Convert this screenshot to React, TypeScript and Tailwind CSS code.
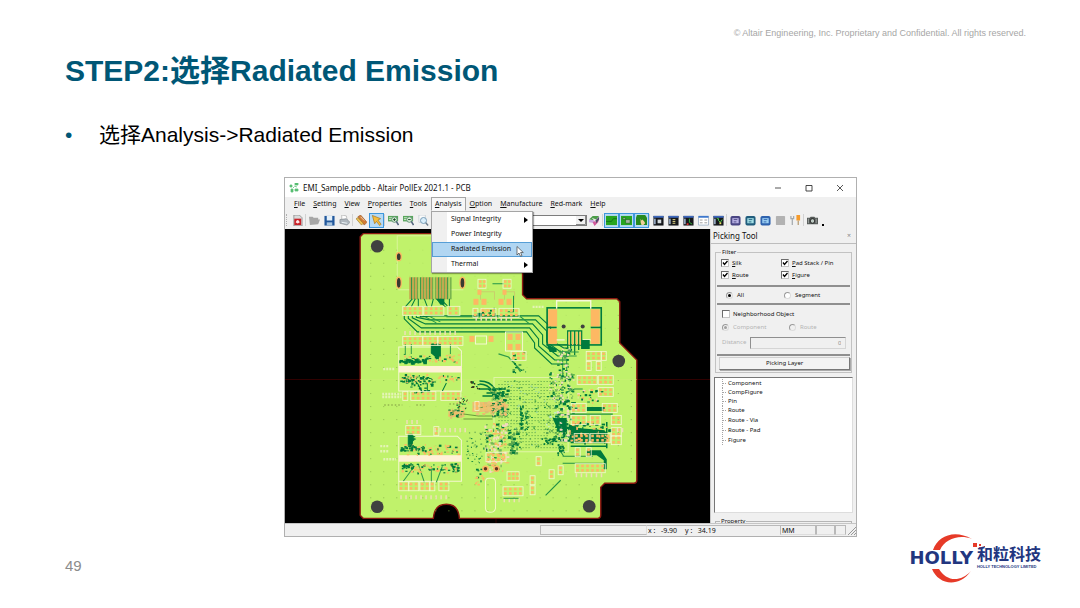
import type { ReactNode } from "react";
import { clsx } from "clsx";

type Rect = { x: number; y: number; w: number; h: number; fill: string };

const ORANGE = "#fdb863";
const GREEN = "#007a3d";
const SILK = "#f4f7cf";
const PINK = "#f3d9c0";

// Small deterministic generator so the board looks the same on every render
function makeRandom(seed: number) {
  let state = seed;
  return () => {
    state = (state * 1664525 + 1013904223) % 4294967296;
    return state / 4294967296;
  };
}

function scatter(
  seed: number, count: number,
  x: number, y: number, w: number, h: number,
  fills: string[], size = 3
): Rect[] {
  const rnd = makeRandom(seed);
  return Array.from({ length: count }, () => ({
    x: Math.round((x + rnd() * w) * 2) / 2,
    y: Math.round((y + rnd() * h) * 2) / 2,
    w: 0.8 + rnd() * size,
    h: 0.8 + rnd() * size * 0.7,
    fill: fills[Math.floor(rnd() * fills.length)],
  }));
}

const scatters: Rect[] = [
  // upper module
  ...scatter(3, 60, 400, 354, 58, 8, [ORANGE, GREEN, ORANGE], 2),
  ...scatter(4, 40, 399, 359, 26, 3, [GREEN], 3),
  ...scatter(5, 70, 400, 374, 58, 8, [ORANGE, GREEN, ORANGE], 2),
  ...scatter(6, 30, 400, 376, 34, 5, [GREEN], 2),
  ...scatter(8, 22, 410, 382, 22, 10, [GREEN], 2),
  // lower module
  ...scatter(11, 70, 401, 444, 56, 10, [ORANGE, ORANGE, GREEN], 2),
  ...scatter(12, 36, 400, 446, 25, 4, [GREEN], 2),
  ...scatter(13, 70, 401, 463, 56, 9, [ORANGE, ORANGE, GREEN], 2),
  ...scatter(14, 24, 401, 463, 12, 5, [GREEN], 2),
  ...scatter(15, 20, 450, 463, 8, 7, [GREEN], 2),
  ...scatter(16, 22, 408, 434, 5, 12, [GREEN], 2),
  // analog area left of the main chip
  ...scatter(20, 80, 490, 386, 16, 30, [GREEN, GREEN, "#8fc25a"], 3),
  ...scatter(27, 14, 470, 380, 10, 8, ["#3d3a20", GREEN], 2),
  ...scatter(21, 80, 472, 401, 33, 13, ["#efc170", "#dcbf74", "#e6c678", ORANGE], 3),
  ...scatter(26, 40, 448, 408, 15, 9, ["#dcbf74", "#75a045", GREEN, ORANGE], 2),
  ...scatter(28, 30, 455, 396, 13, 12, ["#3d3a20", "#e6c678", GREEN], 1),
  ...scatter(22, 90, 484, 422, 22, 46, [GREEN, PINK, "#75b55a", ORANGE], 3),
  ...scatter(23, 60, 465, 430, 24, 34, [GREEN, "#75b55a"], 1),
  ...scatter(24, 70, 488, 428, 16, 44, [PINK, PINK, ORANGE], 2),
  ...scatter(29, 36, 507, 426, 9, 28, [GREEN, "#58a54f"], 3),
  ...scatter(25, 16, 474, 468, 9, 16, [GREEN, ORANGE], 2),
  // inside the main chip
  ...scatter(30, 120, 506, 380, 56, 68, [GREEN, "#58a54f", "#9dd9a0"], 1),
  ...scatter(31, 30, 519, 404, 2, 24, [GREEN], 2),
  ...scatter(33, 24, 524, 410, 3, 22, [GREEN], 1),
  ...scatter(34, 20, 545, 406, 14, 26, ["#c3ead0", "#58a54f"], 2),
  ...scatter(35, 20, 541, 437, 14, 6, [GREEN], 2),
  ...scatter(32, 16, 556, 444, 8, 10, [GREEN], 2),
  // memory and power area on the right
  ...scatter(40, 80, 548, 372, 24, 26, [GREEN, GREEN, PINK, "#75b55a"], 2),
  ...scatter(41, 110, 554, 398, 20, 42, [GREEN, GREEN, PINK], 3),
  ...scatter(42, 90, 568, 420, 40, 22, [GREEN, GREEN, ORANGE], 3),
  ...scatter(43, 50, 556, 348, 14, 32, [GREEN, "#58a54f", PINK], 2),
  ...scatter(44, 30, 576, 386, 26, 16, [GREEN, PINK, ORANGE], 2),
  ...scatter(45, 14, 510, 352, 16, 20, [GREEN, "#58a54f"], 2),
  ...scatter(46, 14, 480, 308, 14, 8, [ORANGE, GREEN], 2),
];

// [x, y, columns, step] rows of two-pad parts
const partRows: [number, number, number, number][] = [
  [403, 307, 4, 5], [424, 307, 4, 5], [448, 307, 2, 6],
  [403, 337, 4, 5], [423, 337, 3, 5], [438, 337, 5, 5],
  [403, 392, 1, 5], [411, 392, 5, 5], [441, 392, 4, 5],
  [406, 426, 3, 5], [434, 427, 1, 5],
  [399, 482, 2, 5], [409, 482, 2, 5], [420, 482, 2, 5], [430, 482, 1, 5], [439, 482, 2, 5],
  [473, 309, 1, 5], [481, 309, 3, 5], [499, 309, 4, 5],
  [478, 280, 2, 4], [503, 280, 2, 4],
  [586, 352, 3, 5], [601, 352, 1, 5], [586, 362, 1, 5], [596, 362, 1, 5],
  [577, 376, 4, 5], [598, 376, 3, 5], [571, 404, 3, 5], [602, 404, 3, 5],
  [571, 416, 3, 5], [590, 416, 2, 5], [611, 416, 2, 5], [611, 428, 2, 5], [611, 436, 2, 5],
  [574, 434, 3, 5], [590, 434, 4, 5], [575, 464, 6, 5],
  [598, 388, 3, 5], [575, 448, 1, 5], [586, 448, 1, 5],
  [507, 472, 3, 4], [503, 487, 4, 5], [530, 476, 1, 5], [530, 486, 1, 5],
  [536, 457, 1, 5], [549, 470, 1, 5], [558, 466, 1, 5], [486, 453, 4, 5],
  [511, 352, 3, 5], [475, 402, 1, 4],
];

function offBoard(x: number, y: number) {
  return (x > 520 && y < 300) || (x > 598 && y > 482) || (x > 617 && y < 362);
}

const gridDots: [number, number][] = [];
for (let x = 370; x < 632; x += 13) {
  for (let y = 250; y < 516; y += 13) {
    if (!offBoard(x, y)) gridDots.push([x, y]);
  }
}

const bgaDots: [number, number][] = [];
for (let x = 498; x < 564; x += 3) {
  for (let y = 381; y < 450; y += 3) {
    if ((x * 7 + y * 5) % 11 > 1) bgaDots.push([x, y]);
  }
}

const busTraces = [0, 1, 2, 3, 4].map((i) => {
  const y = 332 - i * 4;
  return `M${404 + i * 4} 316V${319 - i / 2}L${417 + i * 4} ${y}H${526 + i * 3}L${534 + i * 4} ${y + 11}V${348 - i * 2}L${551 + i * 3} ${364 - i * 4}H568`;
});

const OUTLINE =
  "M363 234H519Q522 234 522 237V295L526 299H616L619 302V343L636 360V480Q636 483 633 483H604L600 487V515Q600 518 597 518H459Q458 504 446 504Q434 504 433 518H363L360 515V237Z";

function PcbView() {
  return (
    <svg viewBox="285 229 424 294" preserveAspectRatio="xMidYMid slice" className="h-full w-full bg-black" role="img" aria-label="PCB">
      <path d="M285 379.5H709M495.5 229V523" stroke="#300000" />
      <path d={OUTLINE} fill="#c0f26b" stroke="#8c1a12" strokeWidth="1.4" />
      <path d="M360 379.5H636" stroke="#cdee78" strokeWidth=".5" />
      {gridDots.map(([x, y]) => (
        <rect key={`${x}-${y}`} x={x} y={y} width="1" height="1" fill="#86b347" opacity={y < 480 && x > 400 && x < 615 ? 0.2 : 0.8} />
      ))}

      {/* mounting holes */}
      {[[377, 246.5], [377, 506.5], [588.5, 506], [618, 361]].map(([x, y]) => (
        <circle key={`${x}-${y}`} cx={x} cy={y} r="6.3" fill="#404140" />
      ))}

      {/* edge connector */}
      <path d="M397 289V236H462M398 290H463" fill="none" stroke="#d9f59a" />
      {[[398.5, 257, 4], [398.5, 283, 5.5], [462, 283, 5.5]].map(([x, y, r]) => (
        <ellipse key={`${x}-${y}`} cx={x} cy={y} rx="2.5" ry={r} fill="#383a30" stroke={ORANGE} strokeWidth="1.3" />
      ))}
      {Array.from({ length: 14 }, (_, i) => (
        <g key={i}>
          <rect x={409 + i * 3} y="277.5" width="2" height="22" fill={i % 5 === 3 ? "#b5d460" : "#c9a24e"} />
          <rect x={411 + i * 3} y="277.5" width="1" height="22" fill={i % 3 ? "#4f9440" : GREEN} />
        </g>
      ))}
      <path d="M412 299L405 307M415 299L411 307M418 299V307M424 299L427 307M433 299L431 307M436 299L445 307M440 299L447 306M449 299V307" stroke={GREEN} fill="none" />
      <path d="M436 299H444V305H440Z" fill={GREEN} />

      {busTraces.map((d) => (
        <path key={d} d={d} fill="none" stroke={GREEN} strokeWidth="1.1" />
      ))}
      <path d="M425 317L436 323M430 317L440 322M446 317H520L529 324M492 284H503M507 312H513V296" stroke="#219548" fill="none" />

      {/* connectors with the cream bars */}
      {[[347, 366, 391], [436, 455, 481]].map(([top, bar, bottom]) => (
        <g key={top}>
          <path d={`M398.5 ${top}H457L461 ${top + 4}V${bottom}H398.5Z`} fill="none" stroke={SILK} />
          <rect x="398.5" y={bar} width="62.5" height="6.5" fill="#fff1d6" />
        </g>
      ))}
      <path d="M431 344H440V357H436L431 353ZM408 434H412V446H408ZM417 383L422 392M427 383V392M446 383L442 391" fill={GREEN} stroke={GREEN} />
      <path d="M405 344V354M411 344V354M450 344V354M418 464L424 482M431 466V482M442 466L436 482M414 466L403 481" stroke="#2e9a4a" fill="none" />

      {/* usb style connector */}
      <rect x="546.5" y="308" width="54" height="37" fill="none" stroke={GREEN} strokeWidth="1.6" />
      <path d="M546 327.5H556M590 327.5H601" stroke={GREEN} strokeWidth="1.6" />
      {[[547.5, 309.5, 17], [547.5, 329, 15], [590, 309.5, 17], [590, 329, 15]].map(([x, y, h]) => (
        <rect key={`${x}-${y}`} x={x} y={y} width="9" height={h} fill={ORANGE} />
      ))}
      <path d="M556 309V301H590V309M556 340H564M582 340H590" fill="none" stroke="#f7f8dc" strokeWidth="1.4" />
      <circle cx="563" cy="326.5" r="2" fill="#404140" />
      <circle cx="582" cy="326.5" r="2" fill="#404140" />
      <path d="M567 349V331H581V349M570 331V352M574 331V355M578 331V350" stroke={GREEN} strokeWidth="1.2" fill="none" />
      <path d="M568.5 332V345M572 332V345M576 332V345M579.5 332V345" stroke={ORANGE} strokeWidth="1.3" />
      <path d="M581 340H589V349H581ZM546 344L556 349V352H549Z" fill={GREEN} />
      <path d="M558 352H578M560 356H576M562 350V378M566 352V378" stroke="#2e9a4a" fill="none" />

      {/* discrete parts near the top */}
      <path d="M480 300V292H494V300M504 300V292H514V300" fill="none" stroke="#c8cf6c" />
      {[[473, 299, 5], [481, 299, 5], [498, 299, 5], [506, 299, 5], [477, 290, 4], [502, 290, 4], [469, 336, 5], [488, 336, 5], [507, 334, 5], [515, 334, 5], [507, 344, 5], [515, 344, 5]].map(([x, y, s]) => (
        <rect key={`${x}-${y}`} x={x} y={y} width={s} height={s + 1} fill={ORANGE} />
      ))}
      <path d="M475 336H486V344H475ZM505 332H522V351H505Z" fill="none" stroke={SILK} />
      <path d="M477 313H484V316H477Z" fill={GREEN} />
      <path d="M498 354L508 357L520 370M513 362L520 372" stroke="#2e9a4a" strokeWidth="1.3" fill="none" />

      {/* main chip */}
      <path d="M493.5 377.5H567.5V451.5H493.5Z" fill="none" stroke="#dff5a6" />
      {bgaDots.map(([x, y]) => (
        <rect key={`${x}-${y}`} x={x} y={y} width="1" height="1" fill="#4f9c45" />
      ))}
      <path d="M479 381Q490 381 494 389H505M479 384Q487 384 492 391L503 396M478 389H488L500 398M482 396H505M486 393L504 393" stroke={GREEN} strokeWidth="1.6" fill="none" />
      <path d="M472 402H494L505 398V409L494 412H472ZM448 410H464V417H448Z" fill="#e9c272" />
      <path d="M463 414L478 416H500M463 419H492M478 408L500 404" stroke="#6c9c3d" fill="none" />
      <path d="M568 424L576 428L604 430V443H570ZM552 418H566V432H558Z" fill={GREEN} />
      <path d="M586 407H604V411H586ZM586 450H600L606 459V469H603V460L596 455H586Z" fill={GREEN} />
      <path d="M568 414H612M562 456H592M558 448L563 456M562 463H602M566 392L574 389H582M545 495L560 480" stroke="#229246" strokeWidth="1.1" fill="none" />
      <path d="M606 422V448M570 446H606" stroke={GREEN} strokeWidth="1.5" fill="none" />

      {scatters.map((r, i) => (
        <rect key={i} x={r.x} y={r.y} width={r.w} height={r.h} fill={r.fill} />
      ))}

      {partRows.map(([x, y, cols, step]) => (
        <g key={`${x}-${y}`}>
          <rect x={x - 0.5} y={y - 0.5} width={cols * step} height="9" fill="none" stroke={SILK} strokeWidth=".8" />
          {Array.from({ length: cols }, (_, i) => (
            <g key={i} fill={ORANGE}>
              <rect x={x + i * step + 0.5} y={y + 0.5} width="2.6" height="2.6" />
              <rect x={x + i * step + 0.5} y={y + 4.8} width="2.6" height="2.6" />
            </g>
          ))}
        </g>
      ))}

      {/* reference designator marks */}
      <path d="M382 394H401M382 397H401M380 446H388M380 451H388M383 459H396M383 369H395M532 307H544" stroke="#e4f4b5" strokeWidth="2.4" strokeDasharray="2 1" />
      <path d="M400 497H448M575 475H604M503 500H519M616 430H624M434 430H466M404 333H456M406 422H420M475 319H512" stroke="#eedfb8" strokeWidth="4" strokeDasharray="1.5 3.5" />
      <path d="M384 405H402M416 405H425M449 404H458" stroke="#7c9440" strokeDasharray="1.5 2" />
      <path d="M503 498H518" stroke="#2e9a4a" />

      <path d="M485 482Q485 478 488 478H492Q495 478 495 482V508Q494 512 490 512Q485 512 485 508Z" fill="none" stroke="#f3f7ca" />
      {[485, 496].map((x) => (
        <circle key={x} cx={x} cy="468.5" r="2.5" fill="#60361f" stroke={ORANGE} strokeWidth="1.6" />
      ))}
    </svg>
  );
}

const menus = ["File", "Setting", "View", "Properties", "Tools", "Analysis", "Option", "Manufacture", "Red-mark", "Help"];

const analysisItems = [
  { label: "Signal Integrity", submenu: true },
  { label: "Power Integrity" },
  { label: "Radiated Emission", active: true },
  { label: "Thermal", submenu: true },
];

function AnalysisMenu() {
  return (
    <div role="menu" className="absolute top-full left-0 z-10 w-[102px] border border-[#a5a5a5] bg-white shadow-[1px_1px_1px_rgba(0,0,0,0.35)]">
      {analysisItems.map((item) => (
        <button
          key={item.label}
          type="button"
          role="menuitem"
          className={clsx(
            "relative flex h-[15px] w-full items-center pr-1 pl-[19px] text-left whitespace-nowrap",
            item.active
              ? "bg-[#b1d6f2] outline outline-[#569ed6] -outline-offset-1"
              : "bg-linear-to-r from-[#f0f0f0] from-15% to-white to-15%"
          )}
        >
          <span className="flex-1">{item.label}</span>
          {item.submenu && (
            <svg viewBox="0 0 4 6" className="h-[6px] w-1"><path d="M0 0L4 3L0 6Z" /></svg>
          )}
          {item.active && (
            <svg viewBox="0 0 8 11" className="absolute top-1 right-2 h-[11px] w-2">
              <path d="M1 .5V9L3 7L4.500 10.300L6 9.600L4.600 6.500H7.300Z" fill="#fff" stroke="#444" strokeWidth=".7" />
            </svg>
          )}
        </button>
      ))}
    </div>
  );
}

function MenuBar() {
  return (
    <nav className="flex h-[14px] items-center bg-[#f0f0f0] pl-[5px]">
      {menus.map((name) => (
        <div key={name} className="relative">
          <button
            type="button"
            className={clsx(
              "block h-[14px] border px-[3px] leading-[12px]",
              name === "Analysis" ? "border-[#a5a5a5] border-b-transparent bg-[#f7f7f7]" : "border-transparent"
            )}
          >
            <span className="underline">{name[0]}</span>{name.slice(1)}
          </button>
          {name === "Analysis" && <AnalysisMenu />}
        </div>
      ))}
    </nav>
  );
}

function ToolButton({ label, active, children }: { label: string; active?: boolean; children: ReactNode }) {
  return (
    <button
      type="button"
      aria-label={label}
      className={clsx(
        "flex size-[15px] shrink-0 items-center justify-center border",
        active ? "border-[#3f97dc] bg-[#b5daf6]" : "border-transparent"
      )}
    >
      <svg viewBox="0 0 12 12" className="size-[11px] shrink-0">{children}</svg>
    </button>
  );
}

function Separator() {
  return <span className="h-3 w-[2px] shrink-0 border-l border-[#d2d2d2]" />;
}

function ZoomIcon({ sign }: { sign: "+" | "-" }) {
  return (
    <>
      <path d="M0 1H11V7H0Z" fill="#58a65c" />
      <path d="M1 3H8M1 5H6" stroke="#d7ecd0" />
      <circle cx="7" cy="5" r="3" fill="#d8ecd5" stroke="#5c8f71" />
      <path d="M9 7L11.500 11" stroke="#52647c" strokeWidth="1.700" />
      <path d={sign === "+" ? "M5.500 5H8.500M7 3.500V6.500" : "M5.500 5H8.500"} stroke="#124a21" />
    </>
  );
}

function DarkWindow({ children }: { children: ReactNode }) {
  return (
    <>
      <path d="M.5 1H11.500V11.500H.5Z" fill="#16181c" />
      <path d="M.5 1H11.500V3H.5Z" fill="#3e68bd" />
      <path d="M1 4H3V10H1Z" fill="#93a5bd" />
      {children}
    </>
  );
}

function BadgeIcon({ from, to }: { from: string; to: string }) {
  return (
    <>
      <rect x=".5" y="1" width="11" height="10.500" rx="2" fill={from} />
      <rect x="2.500" y="3.500" width="7" height="5.500" fill={to} />
      <path d="M4 5H8M4 7.500H7" stroke={from} />
    </>
  );
}

function Toolbar() {
  return (
    <div className="flex h-[18px] items-center bg-[#f0f0f0] pl-px">
      <span className="mr-[2px] h-3 w-[2px] shrink-0 border-l border-dotted border-[#b0b0b0]" />
      <ToolButton label="New">
        <path d="M2 0H8L11 3V12H2Z" fill="#dadada" stroke="#777" strokeWidth=".7" />
        <rect x="2.500" y="4" width="7.500" height="7" fill="#c92229" />
        <path d="M4 8Q6 3 8.500 8Q6 10.500 4 8" fill="#ffe6e6" />
      </ToolButton>
      <Separator />
      <ToolButton label="Open">
        <path d="M0 2H4L5 3H10V5H12L10 10L1 11Z" fill="#a6a6a6" />
      </ToolButton>
      <ToolButton label="Save">
        <path d="M.5 1H11.500V11.500H.5Z" fill="#22589c" />
        <path d="M3 1H9V6H3Z" fill="#e4f0fa" />
        <path d="M3 8H9V11.500H3Z" fill="#aac5de" />
      </ToolButton>
      <ToolButton label="Print">
        <path d="M3 0L8 1L9 6L3 5Z" fill="#fff" stroke="#999" strokeWidth=".6" />
        <path d="M1 5L8 4L12 8L9 11L1 9Z" fill="#aeb6bd" stroke="#737b83" strokeWidth=".6" />
        <path d="M3 8L9 9" stroke="#eef5fa" />
      </ToolButton>
      <Separator />
      <ToolButton label="Measure">
        <path d="M2 2L5 0L12 8L9 11Z" fill="#d27b33" stroke="#8c4a19" strokeWidth=".6" />
        <path d="M0 4L2 3L8 9L6 11Z" fill="#edc353" stroke="#8c6a19" strokeWidth=".6" />
        <path d="M5 2L7 4M7 4L9 6" stroke="#fff" strokeWidth=".7" />
      </ToolButton>
      <ToolButton label="Select" active>
        <path d="M1.500 .5L10.500 4L7.500 5.500L11 10L9.500 11.500L6 7L4 9.500Z" fill="#f5bd3d" stroke="#a36d13" strokeWidth=".7" />
      </ToolButton>
      <Separator />
      <ToolButton label="Zoom in"><ZoomIcon sign="+" /></ToolButton>
      <ToolButton label="Zoom out"><ZoomIcon sign="-" /></ToolButton>
      <ToolButton label="Zoom area">
        <path d="M1 0H8V8H1Z" fill="#fafafa" stroke="#b9c4cc" strokeWidth=".7" />
        <circle cx="6" cy="6" r="3.300" fill="#d8edfa" stroke="#7197b2" />
        <path d="M8.500 8.500L11 11.500" stroke="#6c7d8c" strokeWidth="1.500" />
      </ToolButton>
      <div className="relative ml-px h-[11px] w-[155px] shrink-0">
        <select aria-label="Net" className="block h-full w-full appearance-none border border-[#7d7d7d] bg-white" />
        <svg viewBox="0 0 10 9" className="pointer-events-none absolute top-px right-px h-[9px] w-[10px]">
          <path d="M0 0H10V9H0Z" fill="#f0f0f0" />
          <path d="M9.500 0V8.500H0" fill="none" stroke="#888" />
          <path d="M2 3H8L5 6Z" />
        </svg>
      </div>
      <ToolButton label="Layers">
        <path d="M0 5L4 1H11L7 6Z" fill="#4a9c47" />
        <path d="M0 5L7 6V9L0 8Z" fill="#c7a5dc" />
        <path d="M4 8L11 4L10 8L6 12Z" fill="#d0589a" />
        <path d="M3 3L8 5L7 8Z" fill="#e7e7e7" />
        <path d="M7 6L11 2V5L8 9Z" fill="#4f4a6a" />
      </ToolButton>
      <Separator />
      <ToolButton label="Top" active>
        <path d="M0 1H12V11H0Z" fill="#27a51f" />
        <path d="M0 7H6L8 4H12" stroke="#11731a" fill="none" />
      </ToolButton>
      <ToolButton label="Parts" active>
        <path d="M0 1H12V11H0Z" fill="#27a51f" />
        <path d="M5 5H10V9H5ZM2 3H5V5H2Z" fill="#a6b5a0" stroke="#176a19" strokeWidth=".7" />
      </ToolButton>
      <ToolButton label="Hand" active>
        <path d="M1 0H10L12 3V11H0V3Z" fill="#278a1f" />
        <path d="M5 4L6 6L7 5L9 7L10 9L8 11H6L5 8Z" fill="#f1cf9a" />
      </ToolButton>
      <Separator />
      <ToolButton label="Board view"><DarkWindow><path d="M5 5H9V9H5Z" fill="#d7dde0" /></DarkWindow></ToolButton>
      <ToolButton label="Part view"><DarkWindow><path d="M5 5H8M5 7H8M5 9H8" stroke="#efe38d" /></DarkWindow></ToolButton>
      <ToolButton label="Net view"><DarkWindow><path d="M7 4V8L10 10" stroke="#34b939" fill="none" /><path d="M4 9H6V11H4Z" fill="#e0302c" /></DarkWindow></ToolButton>
      <ToolButton label="List view">
        <path d="M.5 1.500H11.500V11H.5Z" fill="#fff" stroke="#8199b6" strokeWidth=".7" />
        <path d="M.5 1H11.500V3H.5Z" fill="#3e78cd" />
        <path d="M2 5.500H5M2 8.500H5M7 5.500H10M7 8.500H10" stroke="#999" />
      </ToolButton>
      <ToolButton label="Layout view"><DarkWindow><path d="M4 4H6V6L8 8L10 5" stroke="#4ed34b" fill="none" /><path d="M7 8H9V10H7Z" fill="#e7df63" /></DarkWindow></ToolButton>
      <Separator />
      <ToolButton label="Logic"><BadgeIcon from="#4a4684" to="#bbb4e6" /></ToolButton>
      <ToolButton label="Verify"><BadgeIcon from="#205d7d" to="#a5e0e7" /></ToolButton>
      <ToolButton label="Export"><BadgeIcon from="#2e62ae" to="#9dd1f4" /></ToolButton>
      <ToolButton label="Stop"><rect x="1" y="1" width="10" height="10" rx="1" fill="#b2b2b2" /></ToolButton>
      <ToolButton label="Tools">
        <path d="M1 1V4H4V1M2.500 4V11" fill="none" stroke="#a1a7ab" strokeWidth="1.300" />
        <path d="M7 0H11V6H7Z" fill="#f59b2c" />
        <path d="M9 6V11" stroke="#b9a27d" strokeWidth="1.500" />
      </ToolButton>
      <Separator />
      <ToolButton label="Capture">
        <path d="M0 3H3L4 2H8L9 3H12V10H0Z" fill="#565b59" />
        <circle cx="6" cy="6.500" r="2.500" fill="#bcc9c2" stroke="#222" />
        <path d="M10 4V9M1.500 4V9" stroke="#a4a8a6" />
      </ToolButton>
      <span className="mb-[3px] ml-[2px] size-[2px] self-end bg-black" />
    </div>
  );
}

function Check({ label, checked, underline = true }: { label: string; checked?: boolean; underline?: boolean }) {
  return (
    <label className="relative flex items-center gap-[3px]">
      <input type="checkbox" defaultChecked={checked} className="peer size-2 appearance-none border border-[#c4c4c4] border-t-[#6c6c6c] border-l-[#6c6c6c] bg-white" />
      <svg viewBox="0 0 8 8" className="pointer-events-none absolute left-0 hidden size-2 peer-checked:block">
        <path d="M2 3.500L3.500 5.500L6.500 2" fill="none" stroke="#000" strokeWidth="1.300" />
      </svg>
      {underline ? <span><span className="underline">{label[0]}</span>{label.slice(1)}</span> : label}
    </label>
  );
}

function Radio({ name, label, checked, disabled }: { name: string; label: string; checked?: boolean; disabled?: boolean }) {
  return (
    <label className={clsx("flex items-center gap-1", disabled && "text-[#b4b4b4]")}>
      <input
        type="radio"
        name={name}
        defaultChecked={checked}
        disabled={disabled}
        className="size-[7px] appearance-none rounded-full border border-[#9a9a9a] border-r-[#dcdcdc] border-b-[#dcdcdc] bg-white checked:bg-black checked:bg-clip-content checked:p-px disabled:bg-[#f0f0f0] disabled:checked:bg-[#a0a0a0]"
      />
      {label}
    </label>
  );
}

const treeItems = ["Component", "CompFigure", "Pin", "Route", "Route - Via", "Route - Pad", "Figure"];

function PickingTool() {
  return (
    <aside className="flex w-[146px] shrink-0 flex-col border-l border-[#c8c8c8] bg-[#f0f0f0] text-[6px]">
      <header className="flex h-[15px] items-center justify-between border-b border-[#bdbdbd] pr-[5px] pl-[2px] text-[8px]">
        <h2>Picking Tool</h2>
        <button type="button" aria-label="Close panel" className="text-[7px] text-[#888]">×</button>
      </header>

      <fieldset className="mx-1 mt-1 border border-[#c2c2c2] px-px pb-[2px]">
        <legend className="ml-1 px-px leading-[8px]">Filter</legend>
        <div className="grid grid-cols-[60px_1fr] pt-px pb-1 pl-1 leading-[12px]">
          <Check label="Silk" checked />
          <Check label="Pad Stack / Pin" checked />
          <Check label="Route" checked />
          <Check label="Figure" checked />
        </div>
        <div className="grid h-[18px] grid-cols-[58px_1fr] items-center border-t-2 border-[#8f8f8f] pl-[9px]">
          <Radio name="target" label="All" checked />
          <Radio name="target" label="Segment" />
        </div>
        <div className="border-t-2 border-[#8f8f8f] pt-[3px] pl-[5px]">
          <div className="leading-[12px]"><Check label="Neighborhood Object" underline={false} /></div>
          <div className="grid h-[15px] grid-cols-[67px_1fr] items-center">
            <Radio name="near" label="Component" checked disabled />
            <Radio name="near" label="Route" disabled />
          </div>
          <label className="flex h-[15px] items-center gap-1 pr-1 text-[#b4b4b4]">
            <span>Distance</span>
            <input disabled defaultValue="0" className="h-3 min-w-0 flex-1 border border-[#d5d5d5] border-t-[#8f8f8f] border-l-[#8f8f8f] px-1 text-right text-[#8f8f8f]" />
          </label>
        </div>
        <div className="mt-1 border-t-2 border-[#8f8f8f] pt-px pl-[2px]">
          <button type="button" className="block h-[13px] w-full border border-[#d0d0d0] border-r-[#777] border-b-[#777] bg-[#f3f3f3] shadow-[1px_1px_0_#aaa]">Picking Layer</button>
        </div>
      </fieldset>

      <ul className="mx-[3px] mt-1 h-[136px] border border-t-[#777] border-r-[#ddd] border-b-[#ddd] border-l-[#777] bg-white pt-px pl-[7px] leading-[9px]">
        {treeItems.map((name, i) => (
          <li key={name} className={clsx("flex items-center gap-[2px] border-l border-dotted border-[#a5a5a5]", i > 3 && "mt-px")}>
            <span className="w-[3px] border-t border-dotted border-[#a5a5a5]" />
            {name}
          </li>
        ))}
      </ul>
      <fieldset className="mx-1 mt-1 h-[6px] border border-b-0 border-[#b5b5b5]">
        <legend className="ml-1 px-px leading-[8px]">Property</legend>
      </fieldset>
    </aside>
  );
}

function StatusBar() {
  return (
    <footer className="flex h-[13px] items-stretch border-t border-[#c5c5c5] bg-[#f0f0f0] py-px text-[7px] leading-[10px]">
      <span className="flex-1" />
      <span className="w-[107px] border border-[#b9b9b9] border-r-[#ddd]" />
      <span className="flex w-[133px] gap-2 border-t border-[#b9b9b9] pl-px whitespace-pre">
        <span>x :{"   "}-9.90</span>
        <span>y :{"   "}34.19</span>
      </span>
      <span className="w-[36px] border border-[#b9b9b9] border-b-[#ddd] pl-px">MM</span>
      <span className="w-[19px] border border-[#b9b9b9] border-b-[#ddd]" />
      <span className="w-[11px] border border-[#b9b9b9] border-b-[#ddd]" />
      <svg viewBox="0 0 10 10" className="size-[10px] self-end">
        <path d="M2 10L10 2M5 10L10 5M8 10L10 8" stroke="#999" />
      </svg>
    </footer>
  );
}

function AppWindow() {
  return (
    <section className="flex w-full max-w-[573px] flex-col border border-[#b0b0b0] bg-white font-['Noto_Sans','Open_Sans',sans-serif] text-[7px] text-[#111]">
      <header className="flex h-[19px] items-center gap-1 pr-3 pl-1">
        <svg viewBox="0 0 10 10" className="size-[10px]">
          <path d="M1 2H3V4H1ZM6 0H9V2H6ZM5 3L8 4M2 6H4V9H2ZM6 6H9V8H6ZM4 4L5 5" fill="#49b866" stroke="#65c37f" strokeWidth=".8" />
        </svg>
        <h2 className="flex-1 text-[8px]">EMI_Sample.pdbb - Altair PollEx 2021.1 - PCB</h2>
        <div className="flex gap-[23px]">
          <button type="button" aria-label="Minimize"><svg viewBox="0 0 8 8" className="size-2"><path d="M1 4H7" stroke="#555" /></svg></button>
          <button type="button" aria-label="Maximize"><svg viewBox="0 0 8 8" className="size-2"><path d="M1 1.500H7V7H1Z" fill="none" stroke="#333" strokeWidth=".9" /></svg></button>
          <button type="button" aria-label="Close"><svg viewBox="0 0 8 8" className="size-2"><path d="M1 1L7 7M7 1L1 7" stroke="#444" strokeWidth=".9" /></svg></button>
        </div>
      </header>
      <MenuBar />
      <Toolbar />
      <div className="flex">
        {/* the side panel sets the height, the board fills whatever is left */}
        <div className="relative min-w-0 flex-1 bg-black">
          <div className="absolute inset-0"><PcbView /></div>
        </div>
        <PickingTool />
      </div>
      <StatusBar />
    </section>
  );
}

function Logo() {
  return (
    <div className="relative flex items-center gap-1 text-[#22367f]">
      <svg viewBox="0 0 60 52" className="absolute -top-2 left-[19px] h-[52px] w-[60px]">
        <path d="M5 18C10 4 26 -3 44 7C31 2 17 7 12 18Z" fill="#e63a28" />
        <path d="M4 37C10 52 30 57 43 39C32 51 18 49 11 37Z" fill="#e63a28" />
        <path d="M45 11H49V15H45ZM51 12H53V14H51ZM51 15H53V17H51ZM56 14H57V15H56Z" fill="#e63a28" />
      </svg>
      <span className="relative font-['DejaVu_Sans',sans-serif] text-[18px] leading-[36px] font-bold">HOLLY</span>
      <span className="relative flex flex-col font-['Liberation_Sans','Noto_Sans_CJK_SC',sans-serif] font-bold">
        <span className="text-[16px] leading-[18px]">和粒科技</span>
        <span className="text-[4px] leading-[6px] whitespace-nowrap">HOLLY TECHNOLOGY LIMITED</span>
      </span>
    </div>
  );
}

export default function App() {
  return (
    <main className="flex min-h-screen flex-col bg-white font-['Liberation_Sans','Noto_Sans_CJK_SC',sans-serif]">
      <p className="pt-[27px] pr-[54px] text-right text-[9px] leading-[12px] text-[#a6a6a6]">
        © Altair Engineering, Inc. Proprietary and Confidential. All rights reserved.
      </p>
      <h1 className="mt-3 pl-[65px] text-[30px] leading-[40px] font-bold text-[#005776]">STEP2:选择Radiated Emission</h1>
      <ul className="mt-7 pl-[65px] text-[21px] leading-[32px]">
        <li className="flex">
          <span className="w-[34px] text-[#005776]">•</span>
          选择Analysis-&gt;Radiated Emission
        </li>
      </ul>
      <div className="mt-[26px] pr-16 pl-[284px]">
        <AppWindow />
      </div>
      <footer className="mt-auto flex items-end justify-between pr-[39px] pb-[32px] pl-[65px]">
        <span className="text-[15px] leading-[20px] text-[#8c8c8c]">49</span>
        <Logo />
      </footer>
    </main>
  );
}
